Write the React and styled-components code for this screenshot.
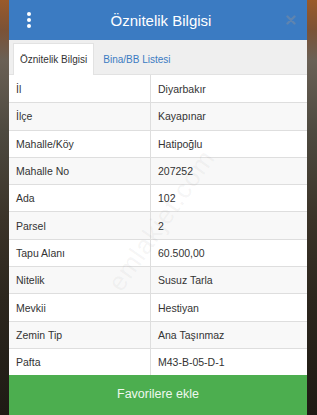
import React from "react";
import styled, { createGlobalStyle } from "styled-components";

const Global = createGlobalStyle`
  html, body { margin: 0; padding: 0; }
  body {
    font-family: "Liberation Sans", Arial, sans-serif;
    background:
      linear-gradient(180deg, #9a5a2a 0px, #7b5236 30px, #6a6055 60px, #4e4a40 130px, #3b3328 220px, #2c261d 300px, #1e1a14 415px);
    width: 317px;
    height: 415px;
    overflow: hidden;
  }
`;

const Page = styled.div`
  display: flex;
  padding: 0 10px 0 9px;
  height: 415px;
  box-sizing: border-box;
`;

const Panel = styled.div`
  position: relative;
  width: 298px;
  display: flex;
  flex-direction: column;
  background: #fff;
  overflow: hidden;
`;

const Header = styled.div`
  height: 40px;
  background: #3b7bc2;
  display: flex;
  align-items: center;
  justify-content: space-between;
  padding: 0 11px 0 17px;
  box-sizing: border-box;
`;

const Title = styled.div`
  color: #fff;
  font-size: 15px;
  flex: 1;
  text-align: center;
  margin-left: 4px;
  padding-top: 1px;
`;

const Dots = styled.div`
  display: flex;
  flex-direction: column;
  gap: 2px;
  width: 6px;
  align-items: center;
  span {
    width: 4px;
    height: 4px;
    border-radius: 50%;
    background: #fff;
  }
`;

const Close = styled.svg`
  width: 10px;
  height: 10px;
  display: block;
`;

const TabBar = styled.div`
  background: #efefef;
  display: flex;
  align-items: flex-end;
  padding: 3px 0 0 4px;
  height: 35px;
  box-sizing: border-box;
  border-bottom: 1px solid #e2e2e2;
`;

const Tab = styled.div`
  height: 32px;
  display: flex;
  align-items: center;
  padding: 0 ${(p) => (p.$active ? "6px" : "8px")};
  font-size: 10px;
  background: ${(p) => (p.$active ? "#fff" : "transparent")};
  color: ${(p) => (p.$active ? "#333" : "#3b7bc2")};
  border: 1px solid ${(p) => (p.$active ? "#e2e2e2" : "transparent")};
  border-bottom: none;
  margin-bottom: -1px;
  box-sizing: border-box;
`;

const Table = styled.div`
  display: flex;
  flex-direction: column;
`;

const Row = styled.div`
  display: grid;
  grid-template-columns: 141px 1fr;
  height: 27.3px;
  box-sizing: border-box;
  border-top: ${(p) => (p.$first ? "none" : "1px solid #dedede")};
  background: ${(p) => (p.$striped ? "#f8f8f8" : "#fff")};
  font-size: 10.5px;
  color: #333;
`;

const Cell = styled.div`
  display: flex;
  align-items: center;
  padding-left: 7px;
  border-left: ${(p) => (p.$value ? "1px solid #dedede" : "none")};
`;

const Button = styled.div`
  flex: 1;
  background: #4cae4f;
  color: #eef8ee;
  font-size: 12.5px;
  display: flex;
  align-items: center;
  justify-content: center;
  padding-bottom: 2px;
`;

const Watermark = styled.div`
  position: absolute;
  left: 70px;
  top: 205px;
  transform: rotate(-55deg);
  font-size: 26px;
  color: rgba(120, 120, 120, 0.08);
  letter-spacing: 1px;
  pointer-events: none;
  white-space: nowrap;
`;

const rows = [
  ["İl", "Diyarbakır"],
  ["İlçe", "Kayapınar"],
  ["Mahalle/Köy", "Hatipoğlu"],
  ["Mahalle No", "207252"],
  ["Ada", "102"],
  ["Parsel", "2"],
  ["Tapu Alanı", "60.500,00"],
  ["Nitelik", "Susuz Tarla"],
  ["Mevkii", "Hestiyan"],
  ["Zemin Tip", "Ana Taşınmaz"],
  ["Pafta", "M43-B-05-D-1"],
];

export default function App() {
  return (
    <>
      <Global />
      <Page>
        <Panel>
          <Header>
            <Dots>
              <span />
              <span />
              <span />
            </Dots>
            <Title>Öznitelik Bilgisi</Title>
            <Close viewBox="0 0 10 10">
              <path d="M1.5 1.5 L8.5 8.5 M8.5 1.5 L1.5 8.5" stroke="#5e84b0" strokeWidth="2.4" strokeLinecap="round" />
            </Close>
          </Header>
          <TabBar>
            <Tab $active>Öznitelik Bilgisi</Tab>
            <Tab>Bina/BB Listesi</Tab>
          </TabBar>
          <Table>
            {rows.map(([k, v], i) => (
              <Row key={k} $first={i === 0} $striped={i % 2 === 1}>
                <Cell>{k}</Cell>
                <Cell $value>{v}</Cell>
              </Row>
            ))}
          </Table>
          <Button>Favorilere ekle</Button>
          <Watermark>emlakjet.com</Watermark>
        </Panel>
      </Page>
    </>
  );
}
